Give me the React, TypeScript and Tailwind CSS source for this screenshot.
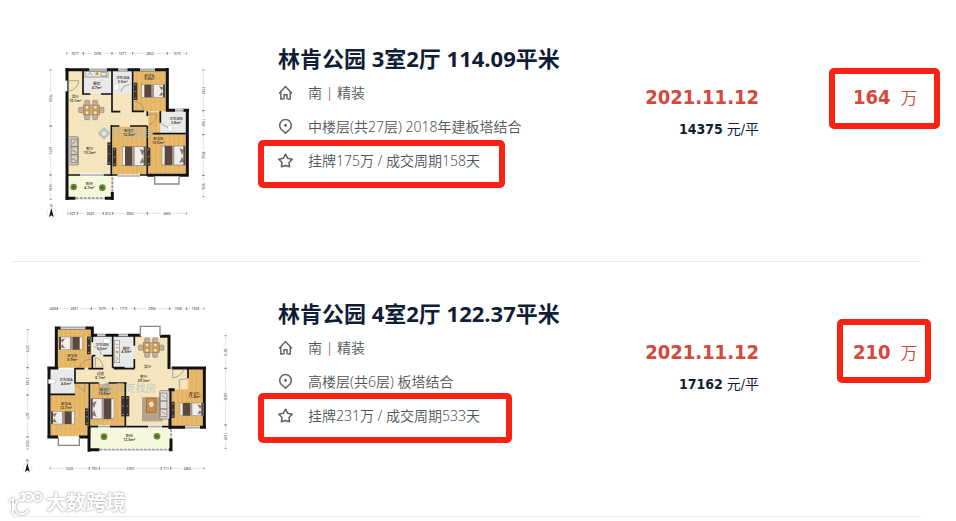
import React from 'react';

const WALL = '#121212';

type Spot = { x: number; y: number };

function Bed({ x, y, flip = false }: Spot & { flip?: boolean }) {
  return (
    <g transform={`translate(${x} ${y})${flip ? ' translate(70 0) scale(-1 1)' : ''}`}>
      <rect x="0" y="0" width="70" height="38" fill="#f1efec" stroke="#8b8078" strokeWidth="1.5" />
      <rect x="8" y="0" width="22" height="38" fill="#5a4740" />
      <rect x="30" y="0" width="7" height="38" fill="#a3958b" />
      <path d="M52 4L66 8L60 18ZM52 34L66 31L60 21Z" fill="#6c5b55" opacity="0.8" />
      <rect x="64" y="0" width="6" height="38" fill="#584a45" />
    </g>
  );
}

function Wardrobe({ x, y, h = 46 }: Spot & { h?: number }) {
  return (
    <g transform={`translate(${x} ${y})`}>
      <rect width="11" height={h} fill="#37312f" />
      <path d={`M3 6H8M3 ${h / 2}H8M3 ${h - 6}H8`} stroke="#9c9592" strokeWidth="3" />
    </g>
  );
}

function Dining({ x, y }: Spot) {
  return (
    <g transform={`translate(${x} ${y})`} stroke="#7d6f68" strokeWidth="1.5">
      <g fill="#bdb0a6">
        <rect x="18" y="0" width="15" height="16" rx="3" />
        <rect x="42" y="0" width="15" height="16" rx="3" />
        <rect x="18" y="42" width="15" height="16" rx="3" />
        <rect x="42" y="42" width="15" height="16" rx="3" />
        <rect x="0" y="21" width="14" height="16" rx="3" />
        <rect x="62" y="21" width="14" height="16" rx="3" />
      </g>
      <rect x="14" y="14" width="48" height="30" fill="#c99a58" stroke="#9a703c" />
      <path d="M38 14V44" stroke="#eed9b0" />
      <g fill="#eceae6" stroke="none">
        <circle cx="25" cy="21" r="4" />
        <circle cx="50" cy="21" r="4" />
        <circle cx="25" cy="37" r="4" />
        <circle cx="50" cy="37" r="4" />
      </g>
    </g>
  );
}

function Plant({ x, y }: Spot) {
  return (
    <g>
      <circle cx={x} cy={y} r="10" fill="#6f8c3f" />
      <circle cx={x} cy={y} r="5" fill="#4a6a28" />
    </g>
  );
}

function Compass({ x, y }: Spot) {
  return (
    <g transform={`translate(${x} ${y})`}>
      <circle r="14" fill="#fff" stroke="#d9d9d9" strokeWidth="2" />
      <path d="M0 -14L7 13L0 8L-7 13Z" fill="#111" />
      <text x="0" y="-18" fontSize="10" textAnchor="middle" fill="#333">N</text>
    </g>
  );
}

function Room({ x, y, name, area }: Spot & { name: string; area?: string }) {
  return (
    <text x={x} y={y} fontSize="11" fontWeight="500" textAnchor="middle" fill="#3a3226">
      <tspan x={x}>{name}</tspan>
      {area && <tspan x={x} dy="11" fontWeight="600">{area}</tspan>}
    </text>
  );
}

/* A dimension line: ticks at each stop, with the length of each stretch in its gap. */
function Ruler({ at, stops, labels, vertical = false }: { at: number; stops: number[]; labels: string[]; vertical?: boolean }) {
  return (
    <g transform={vertical ? `translate(${at} 0) rotate(90) scale(1 -1)` : `translate(0 ${at})`}>
      {labels.map((label, i) => {
        const from = stops[i];
        const to = stops[i + 1];
        const mid = (from + to) / 2;
        return (
          <g key={i}>
            {to - from > 44 && <path d={`M${from} 0H${mid - 16}M${mid + 16} 0H${to}`} stroke="#c4c4c4" strokeWidth="1.5" />}
            <path d={`M${from} -4V4M${to} -4V4`} stroke="#777" strokeWidth="2" />
            <text x={mid} y="4" fontSize="10" fontWeight="600" textAnchor="middle" fill="#707070" transform={vertical ? 'scale(1 -1)' : undefined}>
              {label}
            </text>
          </g>
        );
      })}
    </g>
  );
}

function Mark({ x, y, label }: Spot & { label: string }) {
  return (
    <g opacity="0.6">
      <path d={`M${x - 14} ${y}L${x} ${y - 14}L${x + 14} ${y}L${x} ${y + 14}Z`} fill="none" stroke="#86aacb" strokeWidth="7" />
      <text x={x + 26} y={y + 11} fontSize="31" fontWeight="500" fill="#a9bdcb">{label}</text>
    </g>
  );
}

function Patterns({ id }: { id: string }) {
  return (
    <defs>
      <pattern id={`${id}-wood`} width="14" height="48" patternUnits="userSpaceOnUse">
        <rect width="14" height="48" fill="#e4b463" />
        <rect width="7" height="48" fill="#e9bd70" />
        <path d="M0 0V48M7 20H14M0 40H7" stroke="#d9a856" strokeWidth="1" />
      </pattern>
      <pattern id={`${id}-tile`} width="16" height="16" patternUnits="userSpaceOnUse">
        <rect width="16" height="16" fill="#f5e6bf" />
        <path d="M0 0H16M0 0V16" stroke="#efddb0" strokeWidth="1" />
      </pattern>
    </defs>
  );
}

const planClass = "h-[180px] w-[210px] shrink-0 font-['Noto_Sans','Noto_Sans_CJK_SC',sans-serif]";

function ThreeRoomPlan() {
  return (
    <svg viewBox="-60 0 630 540" className={planClass} role="img" aria-label="3室2厅">
      <Patterns id="p3" />
      <path d="M83 90H380V212H440V403H83Z" fill="url(#p3-tile)" />
      <path d="M282 92H379V214H282ZM217 260H321V404H217ZM325 216H361V284H440V404H325Z" fill="url(#p3-wood)" />
      <path d="M131 92H215V161H131ZM219 92H276V161H219ZM362 216H440V279H362Z" fill="#e9e9e8" />
      <path d="M83 407H217V473H83Z" fill="#f5f8dc" />

      <path d="M81 84V480M76 89H384M382 84V215M378 211H447M442 207V410M446 406H322M76 475H107M195 475H221M217 455V480" fill="none" stroke={WALL} strokeWidth="9" />
      <path d="M129 90V164M129 162H151M183 162H216M216 90V217M214 215H241M278 90V216M276 214H312M214 255V408M214 258H238M270 258H322M322 214V228M322 258V408M338 281H442M361 213V248M83 405H120M190 405H235M300 405H324" fill="none" stroke={WALL} strokeWidth="5" />
      <path d="M148 88H200M235 88H262M300 88H345M405 211H430M120 405H190M232 408H300" stroke="#fff" strokeWidth="9" />
      <path d="M148 88H200M235 88H262M300 88H345M405 211H430M120 405H190M232 408H300" stroke="#aaa" strokeWidth="5" />
      <path d="M107 475H195M217 412V455" stroke="#fff" strokeWidth="8" />
      <path d="M107 475H195M217 412V455" stroke="#999" strokeWidth="6" strokeDasharray="9 3" />
      <path d="M344 409V432H417V409" fill="#fff" stroke="#888" strokeWidth="4" />
      <path d="M78 122V154" stroke="#fff" strokeWidth="8" />
      <path d="M83 122H116Q115 148 84 155M243 155Q246 136 268 134M324 223H350Q350 246 327 254M312 214Q310 188 283 184M362 248Q372 262 395 262" fill="none" stroke="#858585" strokeWidth="2" />

      <rect x="135" y="94" width="69" height="17" fill="#eeeade" stroke="#777" strokeWidth="2" />
      <path d="M142 106L150 98L156 106M183 97V108H199V97Z" fill="none" stroke="#777" strokeWidth="2" />
      <circle cx="171" cy="101" r="5" fill="#c0a52d" />
      <rect x="222" y="132" width="15" height="19" rx="3" fill="#fff" stroke="#aaa" />
      <rect x="384" y="256" width="13" height="18" rx="3" fill="#fff" stroke="#aaa" />
      <Dining x={116} y={181} />
      <g fill="#d6ccc3" stroke="#776e68" strokeWidth="2">
        <rect x="86" y="290" width="29" height="85" rx="3" />
        <path d="M93 297H113V320H93ZM93 320H113V344H93ZM93 344H113V368H93ZM96 312L109 301M95 355L110 363M96 330L110 338" />
      </g>
      <Wardrobe x={202} y={307} h={68} />
      <Wardrobe x={218} y={323} h={56} />
      <Wardrobe x={281} y={128} h={52} />
      <Wardrobe x={320} y={323} h={54} />
      <Bed x={305} y={134} />
      <g transform="translate(247 320) scale(1 1.5)"><Bed x={0} y={0} /></g>
      <g transform="translate(366 318) scale(1 1.5)"><Bed x={0} y={0} /></g>
      <Plant x={101} y={441} />
      <Plant x={187} y={443} />
      <Mark x={192} y={280} label="贝壳找房" />

      <Room x={170} y={136} name="厨房" area="4.7m²" />
      <Room x={248} y={117} name="卫生间A" area="3.5m²" />
      <Room x={328} y={110} name="卧室A" area="9.8m²" />
      <Room x={106} y={174} name="餐厅" area="10.1m²" />
      <Room x={149} y={330} name="客厅" area="15.2m²" />
      <Room x={267} y={276} name="卧室C" area="12.2m²" />
      <Room x={354} y={300} name="卧室B" area="13.5m²" />
      <Room x={408} y={240} name="卫生间B" area="3.8m²" />
      <Room x={148} y={436} name="阳台" area="4.7m²" />

      <Ruler at={40} stops={[80, 130, 216, 278, 382, 440]} labels={['1577', '2396', '1677', '2862', '1675']} />
      <Ruler at={520} stops={[84, 112, 190, 218, 322, 440]} labels={['827', '2625', '812', '2962', '3465']} />
      <Ruler vertical at={32} stops={[90, 258, 405, 478]} labels={['7500', '4376', '1836']} />
      <Ruler vertical at={490} stops={[90, 212, 284, 406, 470]} labels={['3700', '1960', '3566', '1836']} />
      <Compass x={34} y={518} />
    </svg>
  );
}

function FourRoomPlan() {
  return (
    <svg viewBox="0 0 630 540" className={planClass} role="img" aria-label="4室2厅">
      <Patterns id="p4" />
      <path d="M166 183H218V125H448V220H503V283H450V395H166Z" fill="url(#p4-tile)" />
      <path d="M113 102H215V218H113ZM91 300H163V266H205V424H91ZM210 267H316V392H210ZM453 283H503V222H552V395H453Z" fill="url(#p4-wood)" />
      <path d="M219 124H276V181H219ZM280 124H342V216H280ZM91 223H163V297H91Z" fill="#e7e9ea" />
      <path d="M211 398H448V462H211Z" fill="#f5f8dc" />

      <path d="M109 95V222M105 99H221M217 95V126M213 121H347M343 121H364M420 124H451M447 121V222M82 219H115M87 215V430M82 426H114M177 426H210M207 392V470M203 464H239M450 280V402M447 284H464M455 219H490M490 219H558M553 215V400M558 397H452M453 430V468M457 464H447" fill="none" stroke={WALL} strokeWidth="9" />
      <path d="M217 118V142M217 182V222M217 182H226M250 182H278M278 121V218M278 218H314M343 121V152M343 192V220M166 221H193M205 221H250M282 221H344M165 219V266M87 298H165M164 264H236M265 264H320M208 264V430M316 264V396M208 395H235M270 395H318M318 395H385M425 395H452M504 220V250" fill="none" stroke={WALL} strokeWidth="5" />
      <path d="M122 98H196M232 119H256M296 119H324M385 395H425M235 395H270M495 397H540" stroke="#fff" strokeWidth="9" />
      <path d="M122 98H196M232 119H256M296 119H324M385 395H425M235 395H270M495 397H540" stroke="#aaa" strokeWidth="5" />
      <path d="M361 123V94H420V123M115 427V451H178V427" fill="#fff" stroke="#858585" strokeWidth="4" />
      <path d="M239 464H447M453 403V430" stroke="#fff" strokeWidth="9" />
      <path d="M239 464H447M453 403V430" stroke="#999" strokeWidth="5" strokeDasharray="9 3" />
      <path d="M458 220V249Q485 245 493 220M478 283V254L503 251M180 217Q184 196 213 192M226 215V188Q245 190 249 216M166 268L194 290V266M238 264V291Q258 287 266 266M244 180Q240 158 221 155" fill="none" stroke="#858585" strokeWidth="2" />

      <rect x="283" y="137" width="16" height="66" fill="#f0ede5" stroke="#888" strokeWidth="2" />
      <path d="M288 148H295M288 158H295M287 186L294 192L287 198" fill="none" stroke="#777" strokeWidth="2" />
      <circle cx="291" cy="171" r="4" fill="#b69b25" />
      <rect x="250" y="131" width="20" height="15" rx="3" fill="#fff" stroke="#aaa" />
      <rect x="85" y="253" width="22" height="13" rx="2" fill="#fff" stroke="#999" />
      <Dining x={356} y={129} />
      <rect x="366" y="307" width="62" height="72" fill="#b6a38c" />
      <rect x="379" y="309" width="29" height="43" fill="#c98d49" stroke="#8d602d" strokeWidth="2" />
      <path d="M386 325L397 318L402 332L391 337Z" fill="#eee6d5" />
      <g fill="#e5ddd7" stroke="#776e68" strokeWidth="2">
        <rect x="419" y="287" width="29" height="85" rx="3" />
        <path d="M421 294H441V318H421ZM421 318H441V342H421ZM421 342H441V365H421ZM426 301L437 312M425 350L438 358" />
      </g>
      <Wardrobe x={201} y={125} h={53} />
      <Wardrobe x={195} y={340} h={51} />
      <Wardrobe x={304} y={303} h={61} />
      <Wardrobe x={317} y={303} h={61} />
      <Wardrobe x={453} y={320} h={49} />
      <Bed x={117} y={126} flip />
      <Bed x={93} y={349} flip />
      <g transform="translate(212 311) scale(1 1.6)"><Bed x={0} y={0} flip /></g>
      <Bed x={480} y={324} />
      <Plant x={252} y={425} />
      <Plant x={411} y={424} />
      <Mark x={259} y={280} label="贝壳找房" />

      <Room x={157} y={186} name="卧室B" area="8.9m²" />
      <Room x={246} y={154} name="卫生间B" area="3.6m²" />
      <Room x={319} y={164} name="厨房" area="4.6m²" />
      <Room x={241} y={241} name="过道" area="6.1m²" />
      <Room x={138} y={258} name="卫生间A" area="4.6m²" />
      <Room x={383} y={220} name="餐厅" />
      <Room x={371} y={249} name="客厅" area="29.3m²" />
      <Room x={254} y={289} name="卧室C" area="10.6m²" />
      <Room x={138} y={331} name="卧室A" area="12.7m²" />
      <Room x={523} y={299} name="卧室D" area="11.4m²" />
      <Room x={328} y={427} name="阳台" area="12.6m²" />

      <Ruler at={41} stops={[90, 112, 214, 278, 344, 449, 500, 552]} labels={['463', '2831', '1679', '1715', '2966', '1568', '1508']} />
      <Ruler at={520} stops={[90, 208, 238, 424, 452, 552]} labels={['3325', '790', '5355', '711', '2866']} />
      <Ruler vertical at={23} stops={[104, 218, 300, 426, 462]} labels={['3275', '2148', '3471', '1026']} />
      <Ruler vertical at={617} stops={[122, 220, 390, 460]} labels={['2810', '4835', '1207']} />
      <Compass x={22} y={518} />
    </svg>
  );
}

const iconClass = 'size-4 shrink-0 fill-none stroke-[#5c6166]';

function HomeIcon() {
  return (
    <svg viewBox="0 0 16 16" className={iconClass} strokeWidth="1.4" aria-hidden="true">
      <path d="M1 8.4L7.500 1.600L14 8.400M2.800 6.800V14H5.200M9.800 14H12.200V6.800" />
      <path d="M6 14.500V9.800H9V14.500" />
    </svg>
  );
}

function PinIcon() {
  return (
    <svg viewBox="0 0 16 16" className={iconClass} strokeWidth="1.5" aria-hidden="true">
      <path d="M7.500 14.300L3.200 10.300A5.800 5.800 0 1 1 11.800 10.300Z" />
      <circle cx="7.5" cy="6.4" r="1.4" className="fill-[#5c6166] stroke-none" />
    </svg>
  );
}

function StarIcon() {
  return (
    <svg viewBox="0 0 16 16" className={iconClass} strokeWidth="1.5" strokeLinejoin="round" aria-hidden="true">
      <path d="M7.500 1.200L9.700 5.300L14.200 6.200L11 9.500L11.600 13.800L7.500 12.500L3.400 13.800L4 9.500L0.800 6.200L5.300 5.300Z" />
    </svg>
  );
}

type Listing = {
  title: string;
  facing: string;
  floor: string;
  deal: string;
  date: string;
  unitPrice: string;
  price: string;
  plan: React.ReactNode;
  dealFrame: string;
  priceFrame: string;
};

const listings: Listing[] = [
  {
    title: '林肯公园 3室2厅 114.09平米',
    facing: '南 | 精装',
    floor: '中楼层(共27层) 2018年建板塔结合',
    deal: '挂牌175万 / 成交周期158天',
    date: '2021.11.12',
    unitPrice: '14375',
    price: '164',
    plan: <ThreeRoomPlan />,
    dealFrame: '-left-5 -top-1 h-12 w-[247px]',
    priceFrame: '-left-6 -top-4 h-[61px] w-[111px]',
  },
  {
    title: '林肯公园 4室2厅 122.37平米',
    facing: '南 | 精装',
    floor: '高楼层(共6层) 板塔结合',
    deal: '挂牌231万 / 成交周期533天',
    date: '2021.11.12',
    unitPrice: '17162',
    price: '210',
    plan: <FourRoomPlan />,
    dealFrame: '-left-5 -top-1.5 h-[50px] w-[254px]',
    priceFrame: '-left-4 -top-5 h-16 w-[94px]',
  },
];

function Frame({ className }: { className: string }) {
  return <span aria-hidden="true" className={`pointer-events-none absolute rounded-[5px] border-[6px] border-[#fb2214] ${className}`} />;
}

function ListingRow({ item }: { item: Listing }) {
  return (
    <li className="flex items-start border-b border-[#ececec] pt-[33px] pb-[41px] pl-2">
      {item.plan}
      <div className="ml-12 min-w-0 flex-1 whitespace-nowrap">
        <h2 className="text-[22px] leading-9 font-bold text-[#101d37]">{item.title}</h2>
        <ul className="font-['Noto_Sans','Noto_Sans_CJK_SC',sans-serif] text-sm leading-[34px] font-[350] text-[#50555b]">
          <li className="flex items-center gap-3.5"><HomeIcon />{item.facing}</li>
          <li className="flex items-center gap-3.5"><PinIcon />{item.floor}</li>
          <li className="relative flex items-center gap-3.5">
            <StarIcon />
            {item.deal}
            <Frame className={item.dealFrame} />
          </li>
        </ul>
      </div>
      <div className="mt-11 shrink-0 text-right font-['DejaVu_Sans_Condensed','DejaVu_Sans','Noto_Sans_CJK_SC',sans-serif]">
        <p className="text-xl leading-[26px] font-bold text-[#d2493d]">{item.date}</p>
        <p className="mt-[9px] text-sm leading-5 text-[#101d37]">
          <b>{item.unitPrice}</b> 元/平
        </p>
      </div>
      <p className="relative mt-11 ml-[94px] flex w-[68px] shrink-0 items-baseline gap-2.5 leading-[26px] text-[#d2493d]">
        <b className="font-['DejaVu_Sans_Condensed','DejaVu_Sans',sans-serif] text-xl leading-[26px]">{item.price}</b>
        <span className="text-[17px] leading-[26px] font-[350]">万</span>
        <Frame className={item.priceFrame} />
      </p>
    </li>
  );
}

function Watermark() {
  return (
    <div className="absolute top-[489px] left-2 flex items-center">
      <svg viewBox="0 0 38 28" className="h-7 w-[38px] fill-none drop-shadow-[0_0_1px_#888]" strokeLinecap="round" strokeLinejoin="round" aria-hidden="true">
        <g stroke="#fff" strokeWidth="2">
          <path d="M1.500 12L5 9.500V24M14 11A7 7 0 1 0 20 21M12.500 6L15.500 4V12" />
          <circle cx="20.5" cy="8" r="4" />
          <circle cx="29.5" cy="8" r="4" />
        </g>
      </svg>
      <span className="text-[20px] leading-7 font-bold text-white [text-shadow:0_0_2px_#aaa,0_0_2px_#bbb]">大数跨境</span>
    </div>
  );
}

export default function App() {
  return (
    <main className="relative bg-white pt-[7px] pr-[35px] pl-3 font-['Open_Sans','Noto_Sans_CJK_SC',sans-serif]">
      <ul>
        {listings.map((item) => (
          <ListingRow key={item.title} item={item} />
        ))}
      </ul>
      <Watermark />
    </main>
  );
}
